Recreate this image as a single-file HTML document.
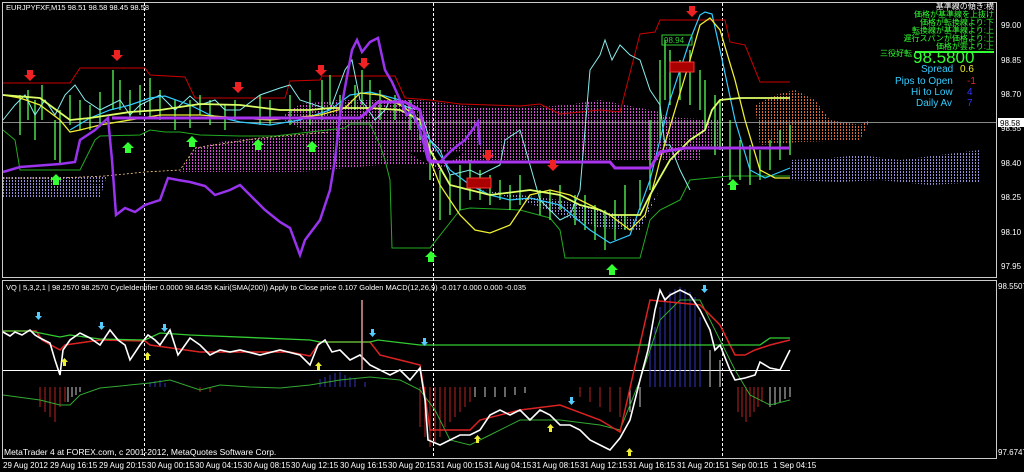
<!DOCTYPE html><html><head><style>
html,body{margin:0;padding:0;background:#000;width:1024px;height:472px;overflow:hidden}
svg{display:block}
text{font-family:"Liberation Sans",sans-serif;font-size:8px;fill:#fff}
.j{font-family:"Liberation Sans","Noto Sans CJK JP",sans-serif;font-size:8px;fill:#3f3}
</style></head><body>
<svg width="1024" height="472" viewBox="0 0 1024 472">
<defs>
<pattern id="mg" width="3" height="3" patternUnits="userSpaceOnUse"><rect width="1" height="2" fill="#d04cd0"/></pattern>
<pattern id="bl" width="3" height="3" patternUnits="userSpaceOnUse"><rect width="1" height="2" fill="#9a8cd8"/></pattern>
<pattern id="or" width="3" height="3" patternUnits="userSpaceOnUse"><rect width="1" height="2" fill="#d86a3a"/></pattern>
</defs>
<rect width="1024" height="472" fill="#000"/>
<rect x="2.5" y="2.5" width="994" height="275" fill="none" stroke="#fff" stroke-opacity=".8"/>
<rect x="2.5" y="280.5" width="994" height="178" fill="none" stroke="#fff" stroke-opacity=".8"/>
<g stroke="#fff" stroke-dasharray="3,2" stroke-width="1">
<line x1="144.5" y1="3" x2="144.5" y2="458"/><line x1="433.5" y1="3" x2="433.5" y2="458"/><line x1="722.5" y1="3" x2="722.5" y2="458"/>
</g>
<!-- clouds -->
<polygon points="3,178 60,178 65,182 100,182 105,176 3,176" fill="url(#bl)"/>
<polygon points="3,176 60,176 70,182 100,184 108,172 100,198 3,198" fill="url(#bl)"/>
<polygon points="480,190 520,195 560,200 600,210 640,220 660,190 640,230 600,228 560,215 520,200" fill="url(#bl)"/>
<polygon points="790,160 830,158 860,155 900,160 940,155 980,150 980,182 930,185 880,180 840,182 790,180" fill="url(#bl)"/>
<polygon points="180,172 195,148 230,140 290,136 340,132 370,130 390,140 420,160 440,170 480,140 520,112 560,106 620,110 680,118 700,140 700,160 620,160 480,160 430,165 380,165 300,172" fill="url(#mg)"/>
<polygon points="280,118 300,104 340,100 420,100 480,108 560,106 600,100 660,112 690,140 560,150 420,152 340,150" fill="url(#mg)"/>
<polygon points="440,118 480,110 520,112 560,105 620,112 680,118 720,120 720,150 640,150 560,145 480,140" fill="url(#mg)"/>
<polygon points="755,105 775,95 795,90 815,100 830,120 860,125 870,120 860,140 800,142 760,145" fill="url(#or)"/>
<polyline points="3,178 60,178 105,176 145,172 180,170 195,148 260,138 330,132" fill="none" stroke="#fc8" stroke-dasharray="2,2" stroke-width=".8"/>
<line x1="3" y1="122.5" x2="996" y2="122.5" stroke="#888"/>
<polyline points="3,83 70,83 80,68 145,68 150,75 185,77 195,98 285,98 290,81 320,80 322,76 395,76 405,98 430,100 460,104 520,106 540,104 560,114 600,110 620,112 640,34 655,32 660,20 725,20 730,42 745,45 760,82 790,82" fill="none" stroke="#c00" stroke-width="1"/>
<polyline points="3,130 15,140 20,170 80,170 95,140 100,136 140,135 150,130 165,132 180,132 200,135 240,136 275,136 345,128 350,124 370,124 380,145 385,160 390,180 392,248 430,248 460,210 470,208 520,210 550,218 560,230 565,258 640,258 650,220 660,210 670,205 680,200 690,180 730,176 790,176" fill="none" stroke="#2a2" stroke-width="1"/>
<g stroke="#5f5" stroke-width="1.3">
<path d="M20 95v40M28 90v30M35 100v40M42 85v35M55 120v40M60 110v55M70 95v30M80 100v30M90 105v25M100 92v35M113 70v40M120 80v30M130 90v30M140 85v30M150 78v40M160 90v30M175 100v30M190 100v28M200 95v20M210 100v25M225 105v25M235 100v20M260 95v30M270 100v25M290 95v30M310 90v35M322 80v40M330 75v30M340 95v30M355 85v25M362 70v35M370 80v30M380 90v30M395 95v25M410 100v30M420 110v30M430 140v40M440 170v50M450 175v40M460 165v45M470 160v40M480 170v30M490 175v30M500 180v20M510 185v25M520 175v30M540 190v25M550 190v30M560 185v25M575 195v30M585 195v35M595 205v35M605 210v40M615 200v40M625 185v45M640 180v30M650 120v70M660 60v80M665 40v60M670 50v55M680 60v40M690 50v55M700 70v40M705 80v50M715 95v60M720 100v50M730 120v60M740 140v40M750 145v40M760 150v30M770 140v30M780 130v30M790 125v30"/>
</g>
<polyline points="3,120 15,105 25,95 35,115 45,100 55,115 65,95 75,85 85,100 100,110 120,100 130,115 140,105 160,95 175,110 190,96 200,105 215,100 225,110 240,110 260,95 280,88 290,85 300,100 330,110 345,70 352,60 360,100 365,105 375,120 385,110 390,100 410,108 420,110 430,140 440,150 450,175 470,170 480,175 500,165 505,140 520,130 540,200 560,220 570,215 580,190 590,70 600,55 605,40 612,60 620,45 630,55 640,60 650,90 660,105 665,145 670,145 680,170 690,190" fill="none" stroke="#8ee" stroke-width="1"/>
<polyline points="70,130 90,118 110,110 130,105 150,98 165,96 190,105 210,115 240,122 270,125 300,120 330,110 350,95 370,92 400,100 430,140 450,170 470,185 490,195 510,200 530,198 560,205 590,230 610,243 630,235 650,180 670,100 690,40 700,15 705,12 712,14 720,50 735,120 750,170 765,178 780,172 790,168" fill="none" stroke="#3cf" stroke-width="1.2"/>
<polyline points="3,95 20,98 40,105 60,120 70,132 80,130 100,125 130,120 160,115 200,115 240,118 270,120 290,118 320,115 345,108 360,93 380,95 400,105 415,115 420,130 430,160 440,185 460,215 475,230 490,233 510,225 530,195 550,190 570,195 590,205 610,215 630,230 645,215 655,180 660,160 675,110 690,60 700,25 710,18 720,30 735,80 745,120 760,170 775,178 790,178" fill="none" stroke="#ee3" stroke-width="1.3"/>
<polyline points="3,95 40,98 70,120 90,118 130,112 160,110 200,104 240,105 280,110 310,110 330,108 370,108 400,110 420,120 430,150 450,185 470,190 490,195 530,190 560,195 580,205 600,210 610,215 640,215 650,195 670,160 690,140 705,130 712,110 720,100 740,98 790,98" fill="none" stroke="#df6" stroke-width="1.8"/>
<polyline points="3,172 20,167 60,164 75,162 80,140 95,130 108,118 112,160 116,215 125,208 135,212 145,205 160,200 168,178 178,180 190,182 205,186 215,195 230,190 240,185 255,200 265,210 280,222 290,228 300,255 305,240 320,220 330,190 335,160 340,115 346,82 352,50 357,40 362,52 370,42 378,38 385,70 392,82 400,100 407,115 412,110 420,130 428,160 440,162 452,150 465,140 478,122 480,145" fill="none" stroke="#93e" stroke-width="2.5"/>
<polyline points="112,118 360,118 378,102 405,102 420,110 430,162 610,162 615,168 650,168 660,152 685,148 790,148" fill="none" stroke="#a3e" stroke-width="3"/>
<rect x="662" y="35" width="30" height="10" fill="none" stroke="#3c3"/><text x="664" y="43" style="fill:#3c3">98.94</text>
<rect x="670" y="62" width="24" height="10" fill="#a00" stroke="#f33"/>
<rect x="467" y="178" width="24" height="10" fill="#a00" stroke="#f33"/>
<g fill="#e22"><path d="M27 70h6v5h3l-6 6-6-6h3z"/><path d="M114 50h6v5h3l-6 6-6-6h3z"/><path d="M235 82h6v5h3l-6 6-6-6h3z"/><path d="M318 65h6v5h3l-6 6-6-6h3z"/><path d="M361 58h6v5h3l-6 6-6-6h3z"/><path d="M485 150h6v5h3l-6 6-6-6h3z"/><path d="M550 160h6v5h3l-6 6-6-6h3z"/><path d="M689 6h6v5h3l-6 6-6-6h3z"/></g>
<g fill="#3f3"><path d="M53 185h6v-5h3l-6-6-6 6h3z"/><path d="M125 153h6v-5h3l-6-6-6 6h3z"/><path d="M189 147h6v-5h3l-6-6-6 6h3z"/><path d="M255 150h6v-5h3l-6-6-6 6h3z"/><path d="M309 152h6v-5h3l-6-6-6 6h3z"/><path d="M428 262h6v-5h3l-6-6-6 6h3z"/><path d="M609 275h6v-5h3l-6-6-6 6h3z"/><path d="M730 190h6v-5h3l-6-6-6 6h3z"/></g>
<text x="6" y="10" style="font-size:7.5px">EURJPYFXF,M15  98.51 98.58 98.45 98.58</text>
<g text-anchor="end">
<text class="j" x="994" y="9" style="fill:#fff">基準線の傾き:横</text>
<text class="j" x="994" y="17">価格が基準線を上抜け</text>
<text class="j" x="994" y="25">価格が転換線より:下</text>
<text class="j" x="994" y="33">転換線が基準線より:上</text>
<text class="j" x="994" y="41">遅行スパンが価格より:上</text>
<text class="j" x="994" y="49">価格が雲より:上</text>
</g>
<text class="j" x="880" y="56">三役好転</text>
<line x1="915" y1="52" x2="994" y2="52" stroke="#3f3" stroke-width="2"/>
<text x="913" y="63" style="font-size:17px;fill:#3f3">98.5800</text>
<text x="921" y="72" style="font-size:10px;fill:#3cf">Spread</text><text x="960" y="72" style="font-size:10px;fill:#ee3">0.6</text>
<text x="895" y="84" style="font-size:10px;fill:#3cf">Pips to Open</text><text x="967" y="84" style="font-size:10px;fill:#e22">-1</text>
<text x="911" y="95" style="font-size:10px;fill:#3cf">Hi to Low</text><text x="967" y="95" style="font-size:10px;fill:#33f">4</text>
<text x="916" y="106" style="font-size:10px;fill:#3cf">Daily Av</text><text x="967" y="106" style="font-size:10px;fill:#33f">7</text>
<g style="font-size:7.5px"><text x="1001" y="28">99.00</text><text x="1001" y="63">98.85</text><text x="1001" y="97">98.70</text><text x="1001" y="131">98.55</text><text x="1001" y="166">98.40</text><text x="1001" y="200">98.25</text><text x="1001" y="235">98.10</text><text x="1001" y="269">97.95</text>
<rect x="998" y="118" width="26" height="9" fill="#fff"/><text x="1000" y="126" style="fill:#000">98.58</text>
<text x="998" y="289">98.5507</text><text x="998" y="455">97.6747</text></g>
<text x="6" y="290" style="font-size:7.5px">VQ | 5,3,2,1 | 98.2570 98.2570  CycleIdentifier 0.0000 98.6435  Kairi(SMA(200)) Apply to Close price 0.107  Golden MACD(12,26,9) -0.017 0.000 0.000 -0.035</text>
<line x1="3" y1="370.5" x2="790" y2="370.5" stroke="#fff"/>
<g stroke-width="1">
<path stroke="#b22" d="M40 387v20M45 387v25M50 387v30M55 387v35M60 387v20M65 387v15M200 387v5M210 387v5M420 387v40M425 387v50M430 387v60M435 387v55M440 387v50M445 387v40M450 387v35M455 387v30M460 387v25M465 387v20M470 387v15M580 387v10M590 387v15M600 387v20M610 387v25M620 387v30M738 387v25M742 387v30M746 387v35M750 387v30M754 387v25M758 387v20M762 387v15"/>
<path stroke="#ccc" d="M68 387v15M72 387v10M76 387v8M80 387v5M475 387v10M485 387v10M495 387v10M505 387v10M515 387v8M525 387v6M630 387v25M640 387v20M770 387v20M775 387v18M780 387v15M785 387v12M790 387v10M660 330v57M680 320v67M690 330v57M700 340v47M710 350v37M720 360v27"/>
<path stroke="#33b" d="M150 387v-5M155 387v-6M160 387v-7M165 387v-4M320 387v-8M325 387v-10M330 387v-12M335 387v-14M340 387v-15M345 387v-12M350 387v-10M355 387v-8M365 387v-5M650 387v-50M655 387v-60M660 387v-80M665 387v-90M670 387v-95M675 387v-98M680 387v-100M685 387v-98M690 387v-95M695 387v-90M700 387v-70"/>
</g>
<polyline points="3,395 40,400 60,405 70,405 80,395 100,388 150,383 170,380 200,390 220,385 250,387 280,388 310,385 340,380 370,377 400,380 420,390 435,410 450,440 470,445 490,435 520,420 560,420 600,425 620,430 640,380 660,320 680,300 700,300 720,340 735,370 750,395 770,405 790,400" fill="none" stroke="#3a3" stroke-width="1"/>
<polyline points="3,331 30,331 36,331 42,340 60,350 65,345 100,340 145,341 150,345 200,352 290,352 310,356 320,342 370,342 380,355 400,360 420,365 425,395 430,430 470,430 480,420 520,410 560,405 600,420 620,432 650,300 700,305 720,325 735,355 745,355 755,350 770,345 790,340" fill="none" stroke="#d22" stroke-width="1.5"/>
<polyline points="3,331 30,331 60,337 70,335 100,339 145,340 160,333 190,335 310,340 320,342 370,342 378,340 420,345 760,345 770,338 790,338" fill="none" stroke="#3c3" stroke-width="1.3"/>
<polyline points="3,332 10,336 15,332 22,335 30,330 35,335 40,338 50,343 55,360 60,375 63,350 70,340 80,333 90,338 100,345 110,330 118,340 125,345 130,360 140,345 148,335 155,340 160,345 170,330 178,355 190,338 200,345 210,355 220,350 230,352 240,350 260,355 280,350 300,355 310,365 318,345 325,340 332,352 340,350 350,360 360,355 370,365 380,370 390,375 400,370 410,380 420,368 425,400 428,440 440,445 450,440 460,435 470,435 480,430 490,415 500,410 510,415 520,410 530,420 540,410 550,415 560,425 570,425 580,430 590,440 600,445 610,450 620,438 630,420 640,380 648,350 655,310 660,290 665,300 670,295 680,290 690,295 700,310 710,330 715,350 720,345 730,370 735,380 745,378 755,375 760,362 770,368 780,370 790,350" fill="none" stroke="#fff" stroke-width="1.6"/>
<line x1="362" y1="300" x2="362" y2="370" stroke="#d99" stroke-width="1.5"/>
<g fill="#5cf"><path d="M37 312h3v4h2l-3.5 4-3.5-4h2z"/><path d="M100 322h3v4h2l-3.5 4-3.5-4h2z"/><path d="M163 324h3v4h2l-3.5 4-3.5-4h2z"/><path d="M371 329h3v4h2l-3.5 4-3.5-4h2z"/><path d="M423 338h3v4h2l-3.5 4-3.5-4h2z"/><path d="M570 397h3v4h2l-3.5 4-3.5-4h2z"/><path d="M703 285h3v4h2l-3.5 4-3.5-4h2z"/></g>
<g fill="#ee3"><path d="M63 366h3v-4h2l-3.5-4-3.5 4h2z"/><path d="M146 360h3v-4h2l-3.5-4-3.5 4h2z"/><path d="M317 370h3v-4h2l-3.5-4-3.5 4h2z"/><path d="M476 443h3v-4h2l-3.5-4-3.5 4h2z"/><path d="M549 432h3v-4h2l-3.5-4-3.5 4h2z"/><path d="M628 456h3v-4h2l-3.5-4-3.5 4h2z"/></g>
<text x="4" y="455" style="font-size:8.5px">MetaTrader 4 at FOREX.com, c 2001-2012, MetaQuotes Software Corp.</text>
<g style="font-size:7px">
<text x="3" y="468">29 Aug 2012</text><text x="50" y="468">29 Aug 16:15</text><text x="99" y="468">29 Aug 20:15</text><text x="147" y="468">30 Aug 00:15</text><text x="195" y="468">30 Aug 04:15</text><text x="243" y="468">30 Aug 08:15</text><text x="291" y="468">30 Aug 12:15</text><text x="340" y="468">30 Aug 16:15</text><text x="388" y="468">30 Aug 20:15</text><text x="436" y="468">31 Aug 00:15</text><text x="484" y="468">31 Aug 04:15</text><text x="532" y="468">31 Aug 08:15</text><text x="580" y="468">31 Aug 12:15</text><text x="628" y="468">31 Aug 16:15</text><text x="677" y="468">31 Aug 20:15</text><text x="725" y="468">1 Sep 00:15</text><text x="773" y="468">1 Sep 04:15</text>
</g>
</svg>
</body></html>
